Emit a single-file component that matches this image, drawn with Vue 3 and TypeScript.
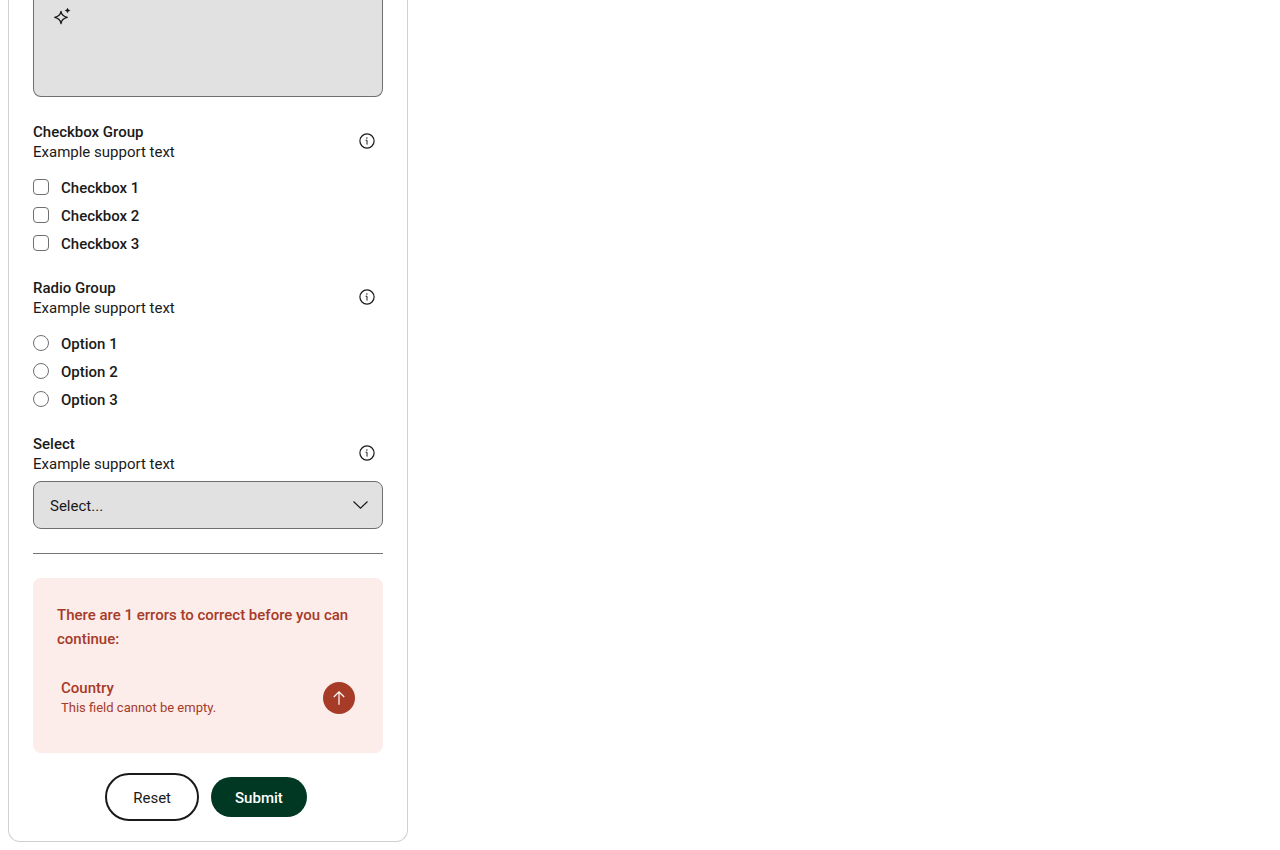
<script setup lang="ts">
import { ref } from 'vue'

const notes = ref('')
const country = ref('')
const checked = ref<string[]>([])
const option = ref('')

const checkboxes: string[] = ['Checkbox 1', 'Checkbox 2', 'Checkbox 3']
const options: string[] = ['Option 1', 'Option 2', 'Option 3']

function reset(): void {
  notes.value = ''
  country.value = ''
  checked.value = []
  option.value = ''
}
</script>

<template>
  <form class="card" @submit.prevent @reset.prevent="reset">
    <div class="area">
      <textarea v-model="notes" aria-label="Text area"></textarea>
      <button type="button" class="spark" aria-label="Generate text">
        <svg width="20" height="20" viewBox="0 0 20 20" aria-hidden="true">
          <path d="M8 4.400C8.500 7.700 10.300 9.500 14.300 10.300C10.300 11.100 8.500 12.900 8 16.600C7.500 12.900 5.700 11.100 1.700 10.300C5.700 9.500 7.500 7.700 8 4.400Z" fill="none" stroke="#1a1a1a" stroke-width="1.300" stroke-linejoin="round" />
          <path d="M14.500 0.800Q14.900 3 17.400 3.500Q14.900 4 14.500 6.300Q14.100 4 11.700 3.500Q14.100 3 14.500 0.800Z" fill="#1a1a1a" />
        </svg>
      </button>
    </div>

    <div class="group" role="group" aria-labelledby="checks-title">
      <div class="head">
        <div class="caption">
          <div id="checks-title" class="title">Checkbox Group</div>
          <div>Example support text</div>
        </div>
        <button type="button" aria-label="About Checkbox Group">
          <svg width="16" height="16" viewBox="0 0 16 16" aria-hidden="true">
            <circle cx="8" cy="8" r="7.100" fill="none" stroke="#1a1a1a" stroke-width="1.200" />
            <path d="M6.600 7.200H8V11.600" fill="none" stroke="#1a1a1a" />
            <circle cx="7.900" cy="5" r="0.700" fill="#1a1a1a" />
          </svg>
        </button>
      </div>
      <div class="choices">
        <label v-for="item in checkboxes" :key="item" class="choice">
          <input v-model="checked" type="checkbox" :value="item" />
          <span>{{ item }}</span>
        </label>
      </div>
    </div>

    <div class="group" role="radiogroup" aria-labelledby="radios-title">
      <div class="head">
        <div class="caption">
          <div id="radios-title" class="title">Radio Group</div>
          <div>Example support text</div>
        </div>
        <button type="button" aria-label="About Radio Group">
          <svg width="16" height="16" viewBox="0 0 16 16" aria-hidden="true">
            <circle cx="8" cy="8" r="7.100" fill="none" stroke="#1a1a1a" stroke-width="1.200" />
            <path d="M6.600 7.200H8V11.600" fill="none" stroke="#1a1a1a" />
            <circle cx="7.900" cy="5" r="0.700" fill="#1a1a1a" />
          </svg>
        </button>
      </div>
      <div class="choices">
        <label v-for="item in options" :key="item" class="choice">
          <input v-model="option" type="radio" name="option" :value="item" />
          <span>{{ item }}</span>
        </label>
      </div>
    </div>

    <div class="group">
      <div class="head">
        <div class="caption">
          <label class="title" for="country">Select</label>
          <div>Example support text</div>
        </div>
        <button type="button" aria-label="About Select">
          <svg width="16" height="16" viewBox="0 0 16 16" aria-hidden="true">
            <circle cx="8" cy="8" r="7.100" fill="none" stroke="#1a1a1a" stroke-width="1.200" />
            <path d="M6.600 7.200H8V11.600" fill="none" stroke="#1a1a1a" />
            <circle cx="7.900" cy="5" r="0.700" fill="#1a1a1a" />
          </svg>
        </button>
      </div>
      <div class="picker">
        <select id="country" v-model="country">
          <option value="">Select...</option>
        </select>
        <svg class="chevron" width="16" height="16" viewBox="0 0 16 16" aria-hidden="true">
          <path d="M1.500 4.500L8.500 11.200L15.500 4.500" fill="none" stroke="#1a1a1a" stroke-width="1.200" />
        </svg>
      </div>
    </div>

    <hr />

    <section class="alert" role="alert">
      <p class="summary">There are 1 errors to correct before you can continue:</p>
      <div class="error">
        <div>
          <div class="title">Country</div>
          <div class="detail">This field cannot be empty.</div>
        </div>
        <button type="button" class="jump" aria-label="Go to Country">
          <svg width="16" height="16" viewBox="0 0 16 16" aria-hidden="true">
            <path d="M8 14.700V1.800M2.800 7L8 1.800L13.200 7" fill="none" stroke="#fff" stroke-width="1.200" />
          </svg>
        </button>
      </div>
    </section>

    <div class="actions">
      <button type="reset" class="reset">Reset</button>
      <button type="submit" class="submit">Submit</button>
    </div>
  </form>
</template>

<style>
body {
  margin: 0;
  background: #fff;
}
</style>

<style scoped>
* {
  box-sizing: border-box;
}

.card {
  max-width: 400px;
  margin: 0 8px 8px;
  padding: 0 24px 20px;
  border: 1px solid #d0d0d0;
  border-top: 0;
  border-radius: 0 0 12px 12px;
  color: #1a1a1a;
  font-family: Roboto, "Liberation Sans", sans-serif;
  font-size: 15px;
  line-height: 20px;
}

button,
select,
textarea {
  font: inherit;
  color: inherit;
}

button {
  padding: 0;
  border: 0;
  background: none;
  cursor: pointer;
}

svg {
  display: block;
}

.area {
  position: relative;
}

.area textarea {
  display: block;
  width: 100%;
  height: 97px;
  padding: 8px 48px;
  border: 1px solid #6f6f6f;
  border-top: 0;
  border-radius: 0 0 8px 8px;
  background: #e1e1e1;
  resize: none;
}

.spark {
  position: absolute;
  top: 7px;
  left: 20px;
}

.group {
  margin-top: 23px;
}

.head {
  display: flex;
  align-items: center;
  justify-content: space-between;
  padding-right: 8px;
}

.caption {
  padding-top: 2px;
}

.title {
  display: block;
  font-weight: 500;
}

.choices {
  display: grid;
  gap: 8px;
  margin-top: 15px;
}

.choice {
  display: flex;
  align-items: center;
  gap: 12px;
  font-weight: 500;
}

.choice span {
  padding-top: 2px;
  line-height: 18px;
}

.choice input {
  appearance: none;
  width: 16px;
  height: 16px;
  margin: 0;
  border: 1px solid #6f6f6f;
  border-radius: 4px;
  background: #fff;
}

.choice input[type='radio'] {
  border-radius: 50%;
}

.choice input:checked {
  background: #003824;
}

.picker {
  display: grid;
  align-items: center;
  margin-top: 7px;
}

.picker select,
.chevron {
  grid-area: 1 / 1;
}

.picker select {
  appearance: none;
  width: 100%;
  height: 48px;
  padding: 2px 48px 0 16px;
  border: 1px solid #6f6f6f;
  border-radius: 8px;
  background: #e1e1e1;
}

.chevron {
  justify-self: end;
  margin-right: 15px;
  pointer-events: none;
}

hr {
  margin: 24px 0;
  border: 0;
  border-top: 1px solid #757575;
}

.alert {
  padding: 25px 24px 31px;
  border-radius: 8px;
  background: #fcecea;
  color: #a63b28;
}

.summary {
  margin: 0 0 23px;
  font-weight: 500;
  line-height: 24px;
}

.error {
  display: flex;
  align-items: center;
  justify-content: space-between;
  padding: 4px;
}

.detail {
  font-size: 13px;
}

.jump {
  display: grid;
  place-items: center;
  width: 32px;
  height: 32px;
  border-radius: 50%;
  background: #a63b28;
}

.actions {
  display: flex;
  align-items: center;
  justify-content: center;
  gap: 12px;
  margin-top: 20px;
  padding-right: 4px;
}

.reset {
  height: 48px;
  padding: 2px 26px 0;
  border: 2px solid #1a1a1a;
  border-radius: 24px;
}

.submit {
  height: 40px;
  padding: 2px 24px 0;
  border-radius: 20px;
  background: #003824;
  color: #fff;
  font-weight: 500;
}
</style>
